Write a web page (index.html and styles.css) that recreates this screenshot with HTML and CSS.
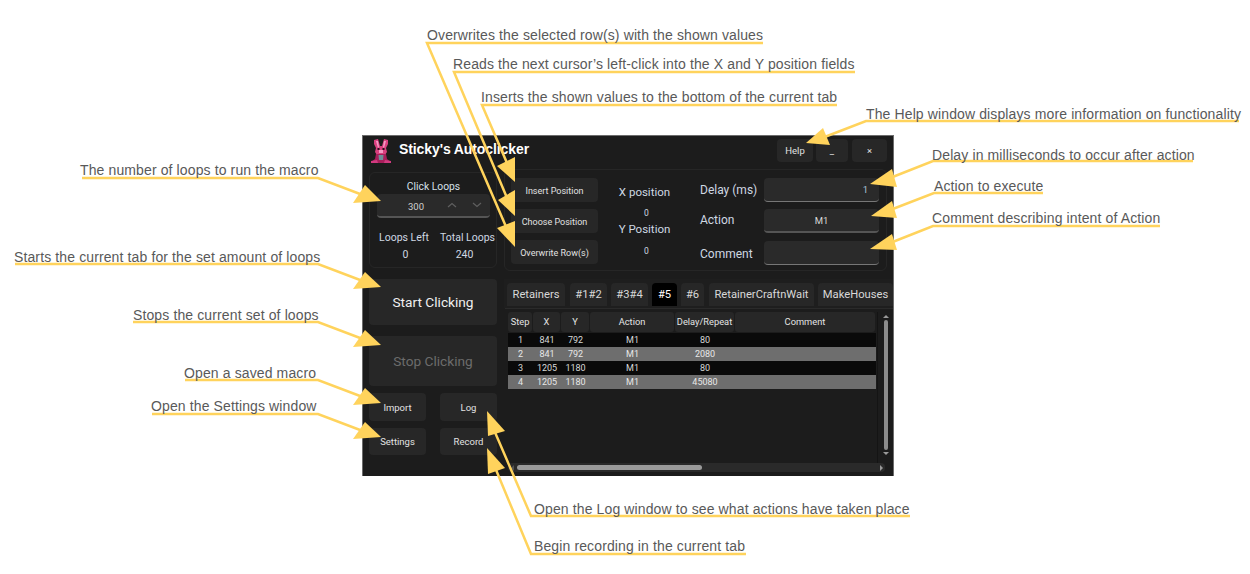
FILE: index.html
```html
<!DOCTYPE html>
<html>
<head>
	<meta charset="utf-8">
	<title>Sticky's Autoclicker</title>
	<link rel="stylesheet" href="styles.css">
</head>

<body>

	<div class="window">
		<div class="titlebar">
			<svg class="logo" width="20" height="24" viewBox="0 0 20 24">
				<path d="M3 1 L7 0 L9 7 L11 7 L13 0 L17 1 L17 5 L15 9 L16 13 L14 16 L6 16 L4 13 L5 9 L3 5 Z" fill="#d9407f"/>
				<path d="M5 2 L7 2 L8 8 L7 9 Z M15 2 L13 2 L12 8 L13 9 Z M8 11 L12 11 L12 14 L8 14 Z" fill="#f59ac4"/>
				<rect x="6.500" y="9" width="2" height="2" fill="#2c0d1c"/>
				<rect x="11.500" y="9" width="2" height="2" fill="#2c0d1c"/>
				<path d="M5 15 L15 15 L16 20 L20 23 L20 24 L0 24 L0 23 L4 20 Z" fill="#a81f5b"/>
				<path d="M7.500 16 L12.500 16 L12 21 L8 21 Z" fill="#6f8f99"/>
				<path d="M0 22 L6 21 L7 24 L0 24 Z M20 22 L14 21 L13 24 L20 24 Z" fill="#d23a80"/>
			</svg>
			<span class="title">Sticky's Autoclicker</span>
			<div class="winbtns">
				<div class="btn btn-help">Help</div>
				<div class="btn btn-min">_</div>
				<div class="btn btn-close">×</div>
			</div>
		</div>

		<div class="main">
			<div class="side">
				<div class="panel loops">
					<div class="loops-head">Click Loops</div>
					<div class="spinner">
						<span class="spin-val">300</span>
						<svg class="chev" width="10" height="6" viewBox="0 0 10 6"><path d="M1 5 L5 1.500 L9 5" fill="none" stroke="#5f5f5f" stroke-width="1.200"/></svg>
						<svg class="chev" width="10" height="6" viewBox="0 0 10 6"><path d="M1 1 L5 4.500 L9 1" fill="none" stroke="#5f5f5f" stroke-width="1.200"/></svg>
					</div>
					<div class="counts">
						<div class="left-count">Loops Left<b>0</b></div>
						<div class="total-count">Total Loops<b>240</b></div>
					</div>
				</div>
				<div class="btn big start">Start Clicking</div>
				<div class="btn big stop">Stop Clicking</div>
				<div class="minor">
					<div class="btn">Import</div>
					<div class="btn">Log</div>
					<div class="btn">Settings</div>
					<div class="btn">Record</div>
				</div>
			</div>

			<div class="content">
				<div class="panel form">
					<div class="actions">
						<div class="btn">Insert Position</div>
						<div class="btn">Choose Position</div>
						<div class="btn">Overwrite Row(s)</div>
					</div>
					<div class="position">
						<div class="pos-label pos-x">X position</div>
						<div class="pos-val pos-x0">0</div>
						<div class="pos-label pos-y">Y Position</div>
						<div class="pos-val pos-y0">0</div>
					</div>
					<div class="fields">
						<span>Delay (ms)</span>
						<div class="field delay">1</div>
						<span class="lbl-action">Action</span>
						<div class="field action">M1</div>
						<span class="lbl-comment">Comment</span>
						<div class="field comment"></div>
					</div>
				</div>

				<div class="tabs">
					<div class="tab t-ret">Retainers</div>
					<div class="tab t-12">#1#2</div>
					<div class="tab t-34">#3#4</div>
					<div class="tab t-5 on">#5</div>
					<div class="tab t-6">#6</div>
					<div class="tab t-craft">RetainerCraftnWait</div>
					<div class="tab t-make">MakeHouses</div>
				</div>

				<div class="tablebox">
					<div class="tablearea">
						<div class="grid">
							<div class="row head">
								<div>Step</div><div>X</div><div>Y</div><div>Action</div><div>Delay/Repeat</div><div>Comment</div>
							</div>
							<div class="row odd">
								<div>1</div><div>841</div><div>792</div><div>M1</div><div>80</div><div></div>
							</div>
							<div class="row even">
								<div>2</div><div>841</div><div>792</div><div>M1</div><div>2080</div><div></div>
							</div>
							<div class="row odd">
								<div>3</div><div>1205</div><div>1180</div><div>M1</div><div>80</div><div></div>
							</div>
							<div class="row even">
								<div>4</div><div>1205</div><div>1180</div><div>M1</div><div>45080</div><div></div>
							</div>
						</div>
						<div class="vscroll">
							<i class="arr-up"></i>
							<div class="vthumb"></div>
							<i class="arr-down"></i>
						</div>
					</div>
					<div class="hscroll">
						<i class="arr-left"></i>
						<div class="hthumb"></div>
						<i class="arr-right"></i>
					</div>
				</div>
			</div>
		</div>
	</div>

	<!-- callouts -->
	<svg class="callouts" width="1250" height="574" viewBox="0 0 1250 574">
		<g fill="none" stroke="#ffd35c" stroke-width="2.500">
			<polyline points="82,178 318,178 368,197"/>
			<polyline points="15,264 318,264 368,283"/>
			<polyline points="133,322 318,322 368,341"/>
			<polyline points="185,380 318,380 368,399"/>
			<polyline points="152,414 318,414 368,433"/>
			<polyline points="763,43 427,43 510,236"/>
			<polyline points="855,72 454,72 510,205"/>
			<polyline points="837,105 482,105 510,170"/>
			<polyline points="1239,121 866,121 822,138"/>
			<polyline points="1193,161 933,161 885,180"/>
			<polyline points="1043,193 934,193 885,212"/>
			<polyline points="1160,226 933,226 885,245"/>
			<polyline points="910,516 531,516 494,430"/>
			<polyline points="746,554 531,554 494,465"/>
		</g>
		<g fill="#ffd35c">
			<polygon points="381,201 353,203 365,185"/>
			<polygon points="381,287 353,289 365,272"/>
			<polygon points="381,345 353,347 365,330"/>
			<polygon points="381,403 353,405 365,388"/>
			<polygon points="381,437 353,439 365,422"/>
			<polygon points="515,182 515,157 497,166"/>
			<polygon points="515,216 515,190 498,200"/>
			<polygon points="515,247 515,221 497,228"/>
			<polygon points="806,143 823,128 830,145"/>
			<polygon points="870,184 892,169 897,187"/>
			<polygon points="871,216 892,201 897,218"/>
			<polygon points="870,249 892,234 897,250"/>
			<polygon points="487,411 488,436 505,431"/>
			<polygon points="487,448 488,474 505,468"/>
		</g>
	</svg>

	<div class="note n-loops">The number of loops to run the macro</div>
	<div class="note n-start">Starts the current tab for the set amount of loops</div>
	<div class="note n-stop">Stops the current set of loops</div>
	<div class="note n-open">Open a saved macro</div>
	<div class="note n-settings">Open the Settings window</div>
	<div class="note n-over">Overwrites the selected row(s) with the shown values</div>
	<div class="note n-reads">Reads the next cursor’s left-click into the X and Y position fields</div>
	<div class="note n-insert">Inserts the shown values to the bottom of the current tab</div>
	<div class="note n-help">The Help window displays more information on functionality</div>
	<div class="note n-delay">Delay in milliseconds to occur after action</div>
	<div class="note n-action">Action to execute</div>
	<div class="note n-comment">Comment describing intent of Action</div>
	<div class="note n-log">Open the Log window to see what actions have taken place</div>
	<div class="note n-record">Begin recording in the current tab</div>

</body>
</html>
```

FILE: styles.css
```css
html, body {
	margin: 0;
	background: white;
}
body {
	position: relative;
	width: 1250px;
	height: 574px;
	padding: 135px 0 0 362px;
	box-sizing: border-box;
	overflow: hidden;
	font-family: Roboto, "Liberation Sans", sans-serif;
	font-size: 10px;
	color: #dcdcdc;
}

/* app window */
.window {
	width: 532px;
	height: 341px;
	box-sizing: border-box;
	border: solid #6c6c6c 1px;
	border-bottom: none;
	background: #1c1c1c;
}
.titlebar {
	display: flex;
	align-items: flex-start;
	height: 33px;
	padding: 3px 6px 0 8px;
	box-sizing: border-box;
}
.logo {
	margin-right: 8px;
}
.title {
	font-family: "Liberation Sans", sans-serif;
	font-weight: bold;
	font-size: 14px;
	letter-spacing: -0.1px;
	color: white;
	margin-top: 2px;
}
.winbtns {
	display: flex;
	margin-left: auto;
	gap: 3px;
}
.btn {
	display: flex;
	align-items: center;
	justify-content: center;
	background: #272727;
	border-radius: 4px;
	font-size: 9.500px;
	color: #e2e2e2;
}
.btn-help { width: 36px; height: 23px; }
.btn-min { width: 32px; height: 23px; }
.btn-close { width: 35px; height: 23px; margin-left: 1px; }

.main {
	display: flex;
	gap: 7px;
	padding-left: 6px;
}
.panel {
	border: solid #262626 1px;
	border-radius: 6px;
	box-sizing: border-box;
}

/* left column */
.side {
	width: 128px;
	padding-top: 3px;
}
.loops {
	height: 96px;
	padding: 7px 6px 0 7px;
	margin-bottom: 11px;
}
.loops-head {
	text-align: center;
	font-size: 10.300px;
	line-height: 13px;
	height: 14px;
	color: #d6e0ea;
}
.spinner {
	display: flex;
	align-items: center;
	width: 113px;
	height: 24px;
	padding-top: 3px;
	box-sizing: border-box;
	background: #2a2a2a;
	border-bottom: solid #555 2px;
	border-radius: 4px;
	font-size: 9.500px;
	color: #cfcfcf;
}
.spin-val {
	flex: none;
	width: 64px;
	padding-left: 14px;
	box-sizing: border-box;
	text-align: center;
	margin-right: 6px;
}
.chev {
	flex: none;
	margin-right: 15px;
	margin-top: -3px;
}
.counts {
	display: flex;
	justify-content: space-between;
	margin: 13px -5px 0 2px;
	font-size: 10.500px;
	color: #cfd8e2;
	text-align: center;
	line-height: 13px;
}
.counts b {
	display: block;
	font-weight: normal;
	margin-top: 4px;
}
.left-count b { padding-left: 3px; }
.total-count b { padding-right: 6px; }
.big {
	font-size: 13.700px;
	color: #f0f0f0;
}
.start { height: 46px; margin-bottom: 11px; }
.stop { height: 50px; margin-bottom: 7px; color: #6c6c6c; }
.minor {
	display: grid;
	grid-template-columns: 57px 57px;
	grid-template-rows: 28px 27px;
	column-gap: 14px;
	row-gap: 7px;
}

/* right column */
.content {
	width: 389px;
}
.form {
	display: flex;
	width: 383px;
	height: 102px;
	padding: 8px 0 0 6px;
}
.actions {
	display: flex;
	flex-direction: column;
	gap: 7px;
	width: 87px;
}
.actions .btn {
	height: 24px;
	padding-top: 1px;
	box-sizing: border-box;
	font-size: 9px;
}
.position {
	width: 91px;
	margin-right: 11px;
	text-align: center;
	font-size: 11.500px;
	color: #cfd8e2;
}
.pos-label {
	line-height: 14px;
	margin-left: 2px;
}
.pos-val {
	font-size: 8.500px;
	line-height: 10px;
	margin-left: 6px;
}
.pos-x { margin-top: 7px; }
.pos-x0 { margin-top: 9px; }
.pos-y { margin-top: 4px; }
.pos-y0 { margin-top: 10px; }
.fields {
	display: grid;
	grid-template-columns: 64px 115px;
	grid-template-rows: 24px 24px 25px;
	row-gap: 7px;
	align-items: center;
	font-size: 12px;
	color: #cfd8e2;
}
.lbl-action { margin-bottom: 2px; }
.lbl-comment { margin-top: 2px; }
.field {
	display: flex;
	align-items: center;
	justify-content: center;
	height: 24px;
	box-sizing: border-box;
	background: #2a2a2a;
	border-bottom: solid #777 1px;
	border-radius: 4px;
	font-size: 9.500px;
	color: #d8d8d8;
}
.delay {
	justify-content: flex-end;
	padding-right: 11px;
	color: #a9c4d8;
}
.action { border-bottom: solid #555 2px; }
.comment { align-self: end; }

/* tabs */
.tabs {
	display: flex;
	height: 29px;
	margin-top: 8px;
	padding-top: 4px;
	box-sizing: border-box;
	background: #1e1e1e;
	overflow: hidden;
}
.tab {
	flex: none;
	height: 23px;
	display: flex;
	align-items: center;
	justify-content: center;
	background: #272727;
	border-radius: 4px 4px 0 0;
	font-size: 11.200px;
	color: #d8d8d8;
}
.tab.on { background: #000; color: #fff; }
.t-ret { width: 58px; margin: 0 5px 0 3px; }
.t-12 { width: 37px; margin-right: 4px; }
.t-34 { width: 37px; margin-right: 4px; }
.t-5 { width: 25px; margin-right: 4px; }
.t-6 { width: 23px; margin-right: 5px; }
.t-craft { width: 105px; margin-right: 4px; }
.t-make { width: 75px; }

/* table */
.tablebox {
	height: 165px;
	width: 388px;
	margin-left: 1px;
	box-sizing: border-box;
	border-top: solid #2a2a2a 1px;
	padding: 3px 3px 0 3px;
	background: #1c1c1c;
}
.tablearea {
	display: flex;
	height: 151px;
}
.grid {
	width: 368px;
}
.row {
	display: grid;
	grid-template-columns: 25px 28px 29px 85px 60px 141px;
	text-align: center;
	font-size: 9px;
	height: 14px;
	line-height: 14px;
}
.head {
	height: 21px;
	line-height: 20px;
	font-size: 9.300px;
	color: #e4e4e4;
}
.head div {
	background: #272727;
	border-radius: 3px;
	height: 20px;
	margin-right: 1px;
}
.odd { background: #0a0a0a; color: #d8d8d8; }
.even { background: #6e6e6e; color: #e8e8e8; }
.vscroll {
	display: flex;
	flex-direction: column;
	align-items: center;
	width: 6px;
	margin-left: 1px;
	padding: 3px 0 0 5px;
	border-left: solid #141414 1px;
}
.vthumb {
	flex: none;
	width: 4px;
	height: 130px;
	margin: 2px 0;
	border-radius: 2px;
	background: #8c8c8c;
}
.arr-up, .arr-down, .arr-left, .arr-right {
	display: block;
	flex: none;
	width: 0;
	height: 0;
	border: solid transparent 3px;
}
.arr-up { border-top: none; border-bottom-color: #9a9a9a; }
.arr-down { border-bottom: none; border-top-color: #9a9a9a; }
.hscroll {
	display: flex;
	align-items: center;
	width: 377px;
	height: 9px;
	background: #2a2a2a;
	border-radius: 4px;
}
.arr-left { border-left: none; border-right-color: #555; margin-left: 3px; }
.hthumb {
	width: 185px;
	height: 5px;
	margin-left: 3px;
	border-radius: 3px;
	background: #9a9a9a;
}
.arr-right { border-right: none; border-left-color: #9a9a9a; margin-left: auto; margin-right: 2px; }

/* annotations lie over the window */
.callouts {
	position: absolute;
	left: 0;
	top: 0;
}
.note {
	position: absolute;
	font-family: "Liberation Sans", sans-serif;
	font-size: 14px;
	letter-spacing: 0.12px;
	line-height: 16px;
	color: #595959;
	white-space: nowrap;
}
.n-loops { left: 80px; top: 162px; }
.n-start { left: 14px; top: 249px; }
.n-stop { left: 133px; top: 307px; }
.n-open { left: 184px; top: 365px; }
.n-settings { left: 151px; top: 398px; }
.n-over { left: 427px; top: 27px; }
.n-reads { left: 453px; top: 56px; }
.n-insert { left: 481px; top: 89px; }
.n-help { left: 866px; top: 106px; }
.n-delay { left: 932px; top: 147px; }
.n-action { left: 934px; top: 178px; }
.n-comment { left: 932px; top: 210px; }
.n-log { left: 534px; top: 501px; }
.n-record { left: 534px; top: 538px; }
```
